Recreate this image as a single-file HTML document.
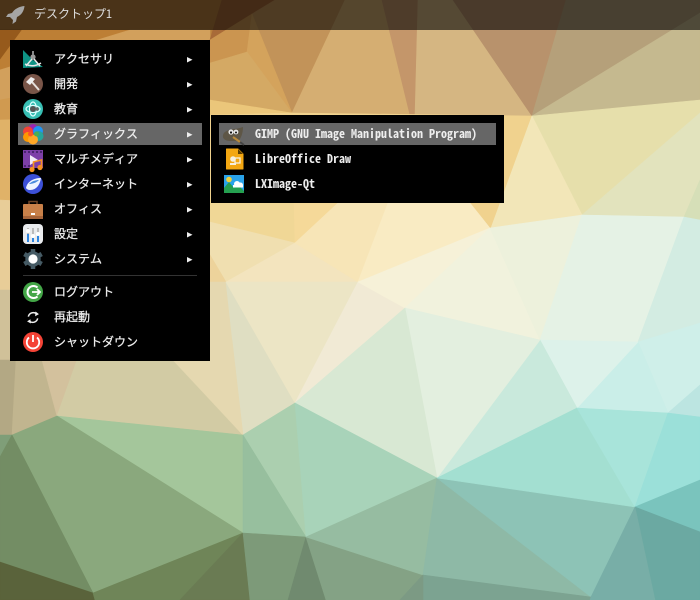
<!DOCTYPE html>
<html><head><meta charset="utf-8"><style>
html,body{margin:0;padding:0}
body{width:700px;height:600px;position:relative;overflow:hidden;background:#d8c090;font-family:"Noto Sans Mono CJK JP","WenQuanYi Zen Hei",monospace;font-size:12px}
svg{position:absolute;left:0;top:0}
.panel{position:absolute;left:0;top:0;width:700px;height:30px;background:rgba(0,0,0,.6)}
.m{position:absolute;background:#000}
.h{position:absolute;background:#666}
.t{position:absolute;color:#eee;line-height:22px;white-space:pre;height:22px;-webkit-text-stroke:.25px #eee}
.s{font-weight:bold;-webkit-text-stroke:0}
</style></head><body>
<svg width="700" height="600" viewBox="0 0 700 600" stroke-width=".6" stroke-linejoin="round">
<g id="w">
<polygon points="0,0 222,0 210,40 0,40" fill="#b9803c" stroke="#b9803c"/>
<polygon points="0,30 22,30 0,60" fill="#965a1c" stroke="#965a1c"/>
<polygon points="22,30 130,30 130,42 0,70 0,60" fill="#bd7f35" stroke="#bd7f35"/>
<polygon points="130,30 210,30 210,60 0,100 0,70" fill="#d2a05c" stroke="#d2a05c"/>
<polygon points="0,100 210,60 210,120 0,130" fill="#d09a50" stroke="#d09a50"/>
<polygon points="0,120 210,115 210,230 0,200" fill="#e0b268" stroke="#e0b268"/>
<polygon points="0,200 210,210 210,340 0,290" fill="#e8cd98" stroke="#e8cd98"/>
<polygon points="0,290 100,290 100,360 0,360" fill="#d0c199" stroke="#d0c199"/>
<polygon points="100,280 232,280 232,360 100,360" fill="#e5d8b0" stroke="#e5d8b0"/>
<polygon points="222,0 275,0 252,14 210,40" fill="#a86a38" stroke="#a86a38"/>
<polygon points="275,0 345,0 292,113 252,14" fill="#c29359" stroke="#c29359"/>
<polygon points="210,40 252,14 247,52 210,63" fill="#cb9550" stroke="#cb9550"/>
<polygon points="252,14 292,113 247,52" fill="#d4a35c" stroke="#d4a35c"/>
<polygon points="247,52 292,113 210,100 210,63" fill="#d4a964" stroke="#d4a964"/>
<polygon points="210,100 292,113 300,130 210,130" fill="#ebc67a" stroke="#ebc67a"/>
<polygon points="345,0 382,0 410,115 292,113" fill="#d5ae72" stroke="#d5ae72"/>
<polygon points="382,0 418,0 415,115 410,115" fill="#c4966a" stroke="#c4966a"/>
<polygon points="418,0 453,0 532,116 415,115" fill="#d5b682" stroke="#d5b682"/>
<polygon points="453,0 566,0 532,116" fill="#b8926c" stroke="#b8926c"/>
<polygon points="566,0 700,0 700,13 532,116" fill="#b5a07a" stroke="#b5a07a"/>
<polygon points="700,13 700,100 532,116" fill="#c5b98f" stroke="#c5b98f"/>
<polygon points="292,113 532,116 491,228 470,203 210,203 210,115" fill="#f0d28e" stroke="#f0d28e"/>
<polygon points="532,116 700,100 700,113 582,215" fill="#e6dfab" stroke="#e6dfab"/>
<polygon points="582,215 700,113 700,180 684,217" fill="#e2e3bd" stroke="#e2e3bd"/>
<polygon points="684,217 700,180 700,220" fill="#d6dfb8" stroke="#d6dfb8"/>
<polygon points="532,116 582,215 491,228" fill="#f2e6b8" stroke="#f2e6b8"/>
<polygon points="210,203 294,203 295,243 210,222" fill="#f0d796" stroke="#f0d796"/>
<polygon points="294,203 338,203 295,243" fill="#f5d999" stroke="#f5d999"/>
<polygon points="210,222 295,243 226,282 210,255" fill="#f0dfb0" stroke="#f0dfb0"/>
<polygon points="226,282 295,243 358,282" fill="#f3e4be" stroke="#f3e4be"/>
<polygon points="295,243 338,203 388,203 358,282" fill="#f7e5b7" stroke="#f7e5b7"/>
<polygon points="388,203 470,203 490,228 358,282" fill="#f9ebc3" stroke="#f9ebc3"/>
<polygon points="210,255 226,282 210,282" fill="#edd39b" stroke="#edd39b"/>
<polygon points="210,282 226,282 243,435 210,395" fill="#e5d8b0" stroke="#e5d8b0"/>
<polygon points="226,282 295,403 243,435" fill="#dfdec2" stroke="#dfdec2"/>
<polygon points="226,282 358,282 295,403" fill="#ece5c5" stroke="#ece5c5"/>
<polygon points="295,403 358,282 405,308" fill="#f1ead5" stroke="#f1ead5"/>
<polygon points="358,282 490,228 405,308" fill="#f6f1d8" stroke="#f6f1d8"/>
<polygon points="405,308 490,228 540,340" fill="#f1f2dd" stroke="#f1f2dd"/>
<polygon points="490,228 582,215 540,340" fill="#edf1dc" stroke="#edf1dc"/>
<polygon points="540,340 582,215 684,217 638,342" fill="#e5f2e5" stroke="#e5f2e5"/>
<polygon points="638,342 684,217 700,220 700,323" fill="#d3ece2" stroke="#d3ece2"/>
<polygon points="638,342 700,323 700,385 668,413" fill="#cfefe9" stroke="#cfefe9"/>
<polygon points="668,413 700,385 700,417" fill="#bce5e1" stroke="#bce5e1"/>
<polygon points="638,342 668,413 577,408" fill="#caeee8" stroke="#caeee8"/>
<polygon points="540,340 638,342 577,408" fill="#ddf2ea" stroke="#ddf2ea"/>
<polygon points="540,340 577,408 437,478" fill="#c9e9dc" stroke="#c9e9dc"/>
<polygon points="405,308 540,340 437,478" fill="#e3efdf" stroke="#e3efdf"/>
<polygon points="295,403 405,308 437,478" fill="#d8e8d3" stroke="#d8e8d3"/>
<polygon points="0,360 16,360 12,435 0,435" fill="#b3a884" stroke="#b3a884"/>
<polygon points="16,360 42,360 57,416 12,435" fill="#c1b58f" stroke="#c1b58f"/>
<polygon points="42,360 77,360 57,416" fill="#d3c19d" stroke="#d3c19d"/>
<polygon points="77,360 173,360 243,435 57,416" fill="#d2cba4" stroke="#d2cba4"/>
<polygon points="173,360 232,340 243,435" fill="#e5d8b0" stroke="#e5d8b0"/>
<polygon points="57,416 243,435 243,533" fill="#a4c69b" stroke="#a4c69b"/>
<polygon points="57,416 12,435 93,593 243,533" fill="#8aa87d" stroke="#8aa87d"/>
<polygon points="0,435 12,435 0,457" fill="#7f9e78" stroke="#7f9e78"/>
<polygon points="0,457 12,435 93,593 0,562" fill="#738d64" stroke="#738d64"/>
<polygon points="0,562 93,593 95,600 0,600" fill="#5a633b" stroke="#5a633b"/>
<polygon points="93,593 243,533 180,600 95,600" fill="#6f8558" stroke="#6f8558"/>
<polygon points="180,600 243,533 250,600" fill="#6a7b53" stroke="#6a7b53"/>
<polygon points="243,435 295,403 306,537" fill="#abcfaf" stroke="#abcfaf"/>
<polygon points="243,435 306,537 243,533" fill="#97bf9e" stroke="#97bf9e"/>
<polygon points="243,533 306,537 288,600 250,600" fill="#7d9a79" stroke="#7d9a79"/>
<polygon points="306,537 288,600 326,600" fill="#708a6f" stroke="#708a6f"/>
<polygon points="306,537 423,575 400,600 326,600" fill="#84a285" stroke="#84a285"/>
<polygon points="295,403 437,478 306,537" fill="#a8d3b9" stroke="#a8d3b9"/>
<polygon points="306,537 437,478 423,575" fill="#96bca1" stroke="#96bca1"/>
<polygon points="437,478 591,597 423,575" fill="#8eb9a6" stroke="#8eb9a6"/>
<polygon points="437,478 635,507 591,597" fill="#8dc3b6" stroke="#8dc3b6"/>
<polygon points="423,575 591,597 590,600 423,600" fill="#7ca391" stroke="#7ca391"/>
<polygon points="423,575 400,600 423,600" fill="#7c9a84" stroke="#7c9a84"/>
<polygon points="437,478 577,408 635,507" fill="#a3dfd1" stroke="#a3dfd1"/>
<polygon points="577,408 668,413 635,507" fill="#a8e4da" stroke="#a8e4da"/>
<polygon points="668,413 700,417 700,480 635,507" fill="#9be0d9" stroke="#9be0d9"/>
<polygon points="635,507 700,480 700,532" fill="#7ac4bd" stroke="#7ac4bd"/>
<polygon points="635,507 700,532 700,600 655,600" fill="#6ba9a2" stroke="#6ba9a2"/>
<polygon points="635,507 655,600 590,600 591,597" fill="#78aea7" stroke="#78aea7"/>
</g>
</svg>
<div class="panel"></div>
<div class="m" style="left:10px;top:40px;width:200px;height:321px"></div>
<div class="m" style="left:211px;top:115px;width:293px;height:88px"></div>
<div class="h" style="left:18px;top:123px;width:184px;height:22px"></div>
<div class="h" style="left:219px;top:123px;width:277px;height:22px"></div>
<div class="m" style="left:23px;top:275px;width:174px;height:1px;background:#333"></div>
<div class="t" style="left:34px;top:3px;color:#ddd;-webkit-text-stroke:0">デスクトップ1</div>
<div class="t" style="left:54px;top:48px">アクセサリ</div>
<div class="t" style="left:54px;top:73px">開発</div>
<div class="t" style="left:54px;top:98px">教育</div>
<div class="t" style="left:54px;top:123px">グラフィックス</div>
<div class="t" style="left:54px;top:148px">マルチメディア</div>
<div class="t" style="left:54px;top:173px">インターネット</div>
<div class="t" style="left:54px;top:198px">オフィス</div>
<div class="t" style="left:54px;top:223px">設定</div>
<div class="t" style="left:54px;top:248px">システム</div>
<div class="t" style="left:54px;top:281px">ログアウト</div>
<div class="t" style="left:54px;top:306px">再起動</div>
<div class="t" style="left:54px;top:331px">シャットダウン</div>
<div class="t s" style="left:255px;top:123px">GIMP (GNU Image Manipulation Program)</div>
<div class="t s" style="left:255px;top:148px">LibreOffice Draw</div>
<div class="t s" style="left:255px;top:173px">LXImage-Qt</div>
<svg width="700" height="600" viewBox="0 0 700 600">
<g fill="#eee">
<polygon points="187,57 187,62.5 192.5,59.8"/>
<polygon points="187,82 187,87.5 192.5,84.8"/>
<polygon points="187,107 187,112.5 192.5,109.8"/>
<polygon points="187,132 187,137.5 192.5,134.8"/>
<polygon points="187,157 187,162.5 192.5,159.8"/>
<polygon points="187,182 187,187.5 192.5,184.8"/>
<polygon points="187,207 187,212.5 192.5,209.8"/>
<polygon points="187,232 187,237.5 192.5,234.8"/>
<polygon points="187,257 187,262.5 192.5,259.8"/>
</g>
<path d="M24.5 6 C19 6.5 14.5 9 12 13 L8 14 L6 17 L10 17 L13 20 L12.5 24 L16 21.5 L17 17 C21.5 15 24 11 24.5 6Z" fill="#a5a5a5"/>
<polygon points="23,50 33,60 43,67 23,68" fill="#0e9384"/>
<circle cx="33" cy="57" r="2.6" fill="#9a9a9a"/>
<rect x="32" y="51" width="2" height="4" fill="#888"/>
<path d="M32 59 L26 66 M34 59 L40 66 M25 64 Q33 68 41 63" stroke="#e8e8e8" stroke-width="1.5" fill="none"/>
<circle cx="33" cy="84" r="10" fill="#795548"/>
<path d="M32 82 L39 90" stroke="#e6e0dc" stroke-width="2"/>
<path d="M26 82 L31 77 L35 79 L30 85Z" fill="#efefef"/>
<circle cx="33" cy="109" r="10" fill="#38bfb4"/>
<ellipse cx="33" cy="109" rx="3.5" ry="7" stroke="#dff" fill="none" stroke-width="1.2"/>
<ellipse cx="33" cy="109" rx="7" ry="3.5" stroke="#dff" fill="none" stroke-width="1.2"/>
<circle cx="33" cy="109" r="3" fill="#555"/>
<circle cx="37" cy="109" r="1.8" fill="#666"/>
<circle cx="33" cy="129" r="5" fill="#9c27b0"/>
<circle cx="38" cy="131" r="5" fill="#2196f3"/>
<circle cx="38.500" cy="136" r="5" fill="#26a69a"/>
<circle cx="28" cy="131.500" r="5" fill="#f44336"/>
<circle cx="28" cy="137" r="5" fill="#ff9800"/>
<circle cx="33" cy="139.500" r="5" fill="#ffa726"/>
<circle cx="36.500" cy="134" r="2.500" fill="#4caf50"/>
<circle cx="30.500" cy="134" r="2.500" fill="#ff5722"/>
<rect x="23" y="150" width="20" height="18" fill="#7d3fa8"/>
<g fill="#4a2470"><rect x="24" y="151" width="2" height="2"/><rect x="28" y="151" width="2" height="2"/><rect x="32" y="151" width="2" height="2"/><rect x="36" y="151" width="2" height="2"/><rect x="40" y="151" width="2" height="2"/><rect x="24" y="165" width="2" height="2"/><rect x="28" y="165" width="2" height="2"/></g>
<polygon points="30,155 30,165 38,160" fill="#f2ecf8"/>
<path d="M33.500 169 V162 L41.500 160 V167" stroke="#f59120" stroke-width="1.6" fill="none"/>
<circle cx="32" cy="169.500" r="2.600" fill="#f59120"/><circle cx="40" cy="167.500" r="2.600" fill="#f59120"/>
<circle cx="33" cy="184" r="10" fill="#3c50d8"/>
<path d="M26 188 C27 182 33 178 41 178 C40 184 37 190 30 190 C28 190 26.500 189 26 188Z" fill="#eef4ff"/>
<path d="M29 184 C32 181 36 180 39 180 C36 183 32 184 29 184Z" fill="#4a8bdc"/>
<path d="M29 204 V201.500 H37 V204" stroke="#6b4226" stroke-width="1.6" fill="none"/>
<rect x="23" y="204" width="20" height="15" rx="1" fill="#c88049"/>
<rect x="23" y="216" width="20" height="3" fill="#a5643a"/>
<rect x="31" y="213" width="4" height="2" fill="#fff"/>
<rect x="23" y="224" width="20" height="20" rx="4" fill="#e9ebee"/>
<g fill="#bbb"><rect x="27" y="228" width="2" height="13"/><rect x="32" y="228" width="2" height="13"/><rect x="37" y="228" width="2" height="13"/></g>
<g fill="#2f86e0"><rect x="27" y="234" width="2" height="8"/><rect x="32" y="238" width="2" height="4"/><rect x="37" y="235" width="2" height="7"/></g>
<circle cx="28" cy="231" r="2" fill="#fff"/><circle cx="33" cy="236" r="2" fill="#fff"/><circle cx="38" cy="234" r="2" fill="#fff"/>
<circle cx="33" cy="259" r="7.700" fill="#455a64"/>
<g stroke="#455a64" stroke-width="4.500"><path d="M33 249 V269"/><path d="M24.300 254 L41.700 264"/><path d="M24.300 264 L41.700 254"/></g>
<circle cx="33" cy="259" r="4.600" fill="#fff"/>
<circle cx="33" cy="292" r="10" fill="#43a647"/>
<path d="M37.500 287.500 A6 6 0 1 0 37.500 296.500" stroke="#fff" stroke-width="2" fill="none"/>
<path d="M32 292 H40 M37 289 L40 292 L37 295" stroke="#fff" stroke-width="1.800" fill="none"/>
<g transform="translate(33 317.500) scale(.85) translate(-33 -317)">
<path d="M27.500 316 A6 6 0 0 1 37 312.500" stroke="#eee" stroke-width="1.800" fill="none"/>
<polygon points="36,310 40,313 35.500,315.500" fill="#eee"/>
<path d="M38.500 318 A6 6 0 0 1 29 321.500" stroke="#eee" stroke-width="1.800" fill="none"/>
<polygon points="30,319 30.500,324 26,321.500" fill="#eee"/>
</g>
<circle cx="33" cy="342" r="10" fill="#f44336"/>
<path d="M29 337.500 A6.200 6.200 0 1 0 37 337.500" stroke="#fff" stroke-width="1.800" fill="none"/>
<path d="M33 335 V342" stroke="#fff" stroke-width="1.800"/>
<path d="M243 127 C240 128 236 129 233 129 C229 130 224 131 223 135 C222 139 226 141 230 141 L238 141 C241 139 243 133 243 127Z" fill="#5e5646"/>
<circle cx="231" cy="132" r="2.600" fill="#e8e8e8"/><circle cx="236" cy="132" r="2.400" fill="#e8e8e8"/>
<circle cx="231" cy="132.500" r="1.100" fill="#111"/><circle cx="236" cy="132.500" r="1" fill="#111"/>
<path d="M233 137 L240 142" stroke="#b98a3a" stroke-width="2"/><path d="M240 142 L244 145" stroke="#444" stroke-width="2"/>
<path d="M226.500 149 H238 L243 154 V169 H226.500 Z" fill="#f3a712" stroke="#f3a712" stroke-linejoin="round"/>
<polygon points="238,149 243,154 238,154" fill="#5a3c00"/>
<circle cx="233" cy="159" r="2.800" fill="#f5efe0"/>
<rect x="235" y="158" width="5" height="5" fill="none" stroke="#f5efe0" stroke-width="1.300"/>
<rect x="230" y="163" width="6" height="2" fill="#f5efe0"/>
<rect x="224" y="175" width="20" height="18" fill="#2aa3ea"/>
<circle cx="229" cy="179.500" r="2.800" fill="#f2d13a"/>
<polygon points="224,193 224,188 229,182 234,188 238,185 244,191 244,193" fill="#25a050"/>
<circle cx="237" cy="184" r="3" fill="#fff"/><circle cx="240.500" cy="185" r="2.500" fill="#fff"/><rect x="233" y="185" width="10" height="2.500" fill="#fff"/>
</svg>
</body></html>
